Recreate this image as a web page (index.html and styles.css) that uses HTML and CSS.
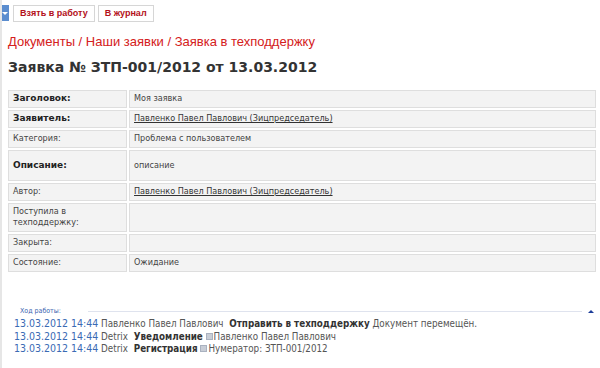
FILE: index.html
```html
<!DOCTYPE html>
<html lang="ru">
<head>
    <meta charset="UTF-8">
    <title>Заявка № ЗТП-001/2012</title>
    <link rel="stylesheet" href="styles.css">
</head>
<body>
    <div class="toolbar">
        <span class="toggle"></span>
        <button class="btn">Взять в работу</button>
        <button class="btn">В журнал</button>
    </div>

    <div class="crumbs">Документы / Наши заявки / Заявка в техподдержку</div>
    <h1 class="title">Заявка № ЗТП-001/2012 от 13.03.2012</h1>

    <table class="card">
        <tr><th class="strong">Заголовок:</th><td>Моя заявка</td></tr>
        <tr><th class="strong">Заявитель:</th><td><a href="#">Павленко Павел Павлович (Зицпредседатель)</a></td></tr>
        <tr><th>Категория:</th><td>Проблема с пользователем</td></tr>
        <tr class="tall"><th class="strong">Описание:</th><td>описание</td></tr>
        <tr><th>Автор:</th><td><a href="#">Павленко Павел Павлович (Зицпредседатель)</a></td></tr>
        <tr><th>Поступила в техподдержку:</th><td></td></tr>
        <tr><th>Закрыта:</th><td></td></tr>
        <tr><th>Состояние:</th><td>Ожидание</td></tr>
    </table>

    <div class="log">
        <div class="log-head">
            <span class="log-title">Ход работы:</span>
            <span class="log-line"></span>
            <span class="log-arrow"></span>
        </div>
        <div class="log-row">
            <span class="date">13.03.2012 14:44</span> Павленко Павел Павлович
            <b>Отправить в техподдержку</b> Документ перемещён.
        </div>
        <div class="log-row">
            <span class="date">13.03.2012 14:44</span> Detrix
            <b>Уведомление</b> <i class="ico"></i>Павленко Павел Павлович
        </div>
        <div class="log-row">
            <span class="date">13.03.2012 14:44</span> Detrix
            <b>Регистрация</b> <i class="ico"></i>Нумератор: ЗТП-001/2012
        </div>
    </div>
</body>
</html>
```

FILE: styles.css
```css
html {
    height: 100%;
}

body {
    margin: 0;
    padding: 5px 2px 0 6px;
    min-height: 100%;
    box-sizing: border-box;
    border-left: 2px solid #e6e6e6;
    background: #fff;
    font-family: "DejaVu Sans", Verdana, sans-serif;
    color: #333;
}

/* верхняя панель */
.toolbar {
    display: flex;
    align-items: center;
    gap: 3px;
    margin-left: -7px;
    height: 16px;
}

.toggle {
    width: 8px;
    height: 16px;
    background: #5b8dcf;
    position: relative;
    margin-right: 1px;
}
.toggle::after {
    content: '';
    position: absolute;
    left: 1px;
    top: 7px;
    border-left: 3px solid transparent;
    border-right: 3px solid transparent;
    border-top: 3px solid #fff;
}

.btn {
    height: 17px;
    padding: 0 6px;
    border: 1px solid #d6d6d6;
    background: #fff;
    color: #b3101a;
    font-family: "Liberation Sans", Arial, sans-serif;
    font-size: 9px;
    font-weight: bold;
    line-height: 15px;
}

.crumbs {
    margin-top: 12px;
    color: #d42020;
    font-family: "Liberation Sans", Arial, sans-serif;
    font-size: 13px;
    line-height: 18px;
}

.title {
    margin: 7px 0 12px;
    font-size: 14px;
    line-height: 18px;
    color: #333;
}

/* карточка заявки */
.card {
    width: calc(100% + 2px);
    border-collapse: separate;
    border-spacing: 2px;
    margin-left: -2px;
    font-family: "DejaVu Sans Condensed", "DejaVu Sans", sans-serif;
    font-size: 9px;
}

.card th,
.card td {
    background: #f3f3f3;
    border: 1px solid #dedede;
    padding: 2px 4px 3px;
    height: 11px;
    text-align: left;
    vertical-align: middle;
    font-weight: normal;
    color: #444;
    line-height: 11px;
}

.card th {
    width: 109px;
}

.card th.strong {
    font-family: "DejaVu Sans", Verdana, sans-serif;
    font-weight: bold;
    color: #222;
}

.card tr.tall th,
.card tr.tall td {
    height: 24px;
}

.card a {
    color: #333;
}

/* ход работы */
.log {
    margin-top: 32px;
    padding-left: 6px;
    font-family: "DejaVu Sans Condensed", "DejaVu Sans", sans-serif;
    font-size: 9.75px;
    color: #555;
}

.log-head {
    display: flex;
    align-items: center;
    height: 10px;
    margin-bottom: 1px;
}

.log-title {
    font-size: 7px;
    color: #3b64b0;
    padding-left: 6px;
    width: 68px;
}

.log-line {
    flex: 1;
    height: 1px;
    background: #dfe3ee;
}

.log-arrow {
    width: 0;
    height: 0;
    margin: 0 4px 0 6px;
    border-left: 3px solid transparent;
    border-right: 3px solid transparent;
    border-bottom: 3px solid #1c3d99;
}

.log-row {
    height: 12.5px;
    line-height: 12.5px;
    white-space: nowrap;
}

.log-row b {
    color: #333;
    margin-left: 3px;
}

.date {
    color: #3a6ab4;
    font-size: 10.5px;
}

.ico {
    display: inline-block;
    width: 5px;
    height: 5px;
    margin-right: 1px;
    background: #c8cdd6;
    border: 1px solid #aab2c0;
    vertical-align: 0;
}
```
